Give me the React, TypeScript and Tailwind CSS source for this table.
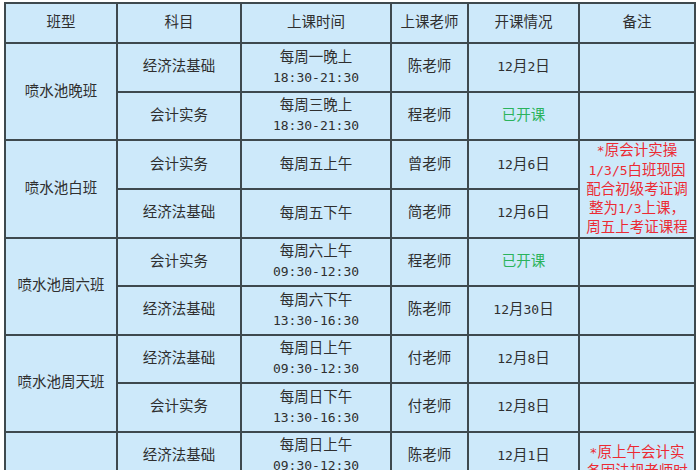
import React from "react";

const Mixed = ({ text }: { text: string }) => {
  const parts = text.match(/[\x20-\x7e]+|[^\x20-\x7e]+/g) || [];
  return (
    <>
      {parts.map((p, i) =>
        /^[\x20-\x7e]+$/.test(p) ? (
          <span key={i} className="text-[13px]">
            {p}
          </span>
        ) : (
          <span key={i}>{p}</span>
        )
      )}
    </>
  );
};

type Row = {
  subject: string;
  time: string[];
  teacher: string;
  status: string;
  open?: boolean;
};

type Group = {
  name: string;
  rows: Row[];
  note?: string[];
};

const groups: Group[] = [
  {
    name: "喷水池晚班",
    rows: [
      { subject: "经济法基础", time: ["每周一晚上", "18:30-21:30"], teacher: "陈老师", status: "12月2日" },
      { subject: "会计实务", time: ["每周三晚上", "18:30-21:30"], teacher: "程老师", status: "已开课", open: true },
    ],
  },
  {
    name: "喷水池白班",
    rows: [
      { subject: "会计实务", time: ["每周五上午"], teacher: "曾老师", status: "12月6日" },
      { subject: "经济法基础", time: ["每周五下午"], teacher: "简老师", status: "12月6日" },
    ],
    note: ["*原会计实操", "1/3/5白班现因", "配合初级考证调", "整为1/3上课，", "周五上考证课程"],
  },
  {
    name: "喷水池周六班",
    rows: [
      { subject: "会计实务", time: ["每周六上午", "09:30-12:30"], teacher: "程老师", status: "已开课", open: true },
      { subject: "经济法基础", time: ["每周六下午", "13:30-16:30"], teacher: "陈老师", status: "12月30日" },
    ],
  },
  {
    name: "喷水池周天班",
    rows: [
      { subject: "经济法基础", time: ["每周日上午", "09:30-12:30"], teacher: "付老师", status: "12月8日" },
      { subject: "会计实务", time: ["每周日下午", "13:30-16:30"], teacher: "付老师", status: "12月8日" },
    ],
  },
  {
    name: "喷水池全日班",
    rows: [
      { subject: "经济法基础", time: ["每周日上午", "09:30-12:30"], teacher: "陈老师", status: "12月1日" },
      { subject: "会计实务", time: ["每周日下午", "13:30-16:30"], teacher: "陈老师", status: "12月1日" },
      { subject: "会计实务", time: ["每周六下午", "13:30-16:30"], teacher: "程老师", status: "12月7日" },
    ],
    note: ["*原上午会计实", "务因法规老师时", "间冲突调整为", "下午上课"],
  },
];

const td = "border-2 border-[#3e494e] text-center align-middle p-0";

export default function App() {
  return (
    <div className="bg-white w-[700px] h-[470px] overflow-hidden pt-[2px] pl-[4px]">
      <table className="table-fixed border-collapse w-[690px] bg-[#cde9fa] text-[#2f2f2f] text-[14.5px] font-['DejaVu_Sans_Mono','Noto_Sans_CJK_SC',monospace]">
        <colgroup>
          <col className="w-[112px]" />
          <col className="w-[124px]" />
          <col className="w-[150px]" />
          <col className="w-[77px]" />
          <col className="w-[111px]" />
          <col className="w-[116px]" />
        </colgroup>
        <thead>
          <tr className="h-[40px]">
            {["班型", "科目", "上课时间", "上课老师", "开课情况", "备注"].map((h) => (
              <th key={h} className={`${td} font-normal`}>
                {h}
              </th>
            ))}
          </tr>
        </thead>
        <tbody>
          {groups.map((g) =>
            g.rows.map((r, i) => (
              <tr key={g.name + i} className="h-[48.5px]">
                {i === 0 && (
                  <td rowSpan={g.rows.length} className={td}>
                    {g.name}
                  </td>
                )}
                <td className={td}>{r.subject}</td>
                <td className={`${td} leading-[20px]`}>
                  {r.time.map((t, k) => (
                    <div key={k}>
                      <Mixed text={t} />
                    </div>
                  ))}
                </td>
                <td className={td}>{r.teacher}</td>
                <td className={`${td} ${r.open ? "text-[#2bb35c]" : ""}`}>
                  <Mixed text={r.status} />
                </td>
                {g.note && i < 2 ? (
                  i === 0 && (
                    <td rowSpan={2} className={`${td} text-[#ec2a33] leading-[18.5px]`}>
                      {g.note.map((n, k) => (
                        <div key={k}>
                          <Mixed text={n} />
                        </div>
                      ))}
                    </td>
                  )
                ) : (
                  <td className={td}></td>
                )}
              </tr>
            ))
          )}
        </tbody>
      </table>
    </div>
  );
}
